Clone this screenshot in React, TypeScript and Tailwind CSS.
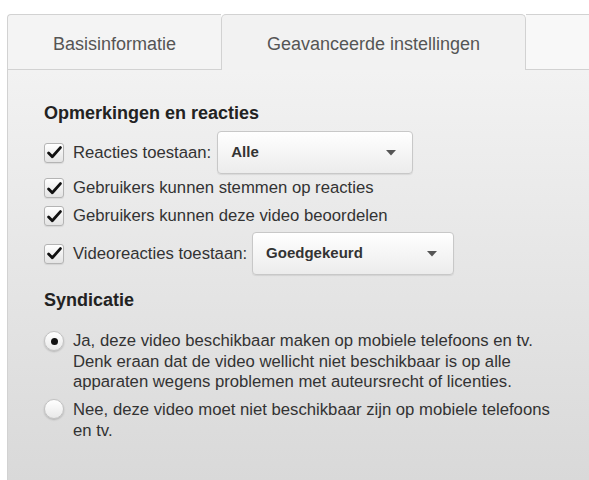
import React, { FC, PropsWithChildren } from "react";

const Checkbox: FC = () => (
  <span className="mr-[9px] flex h-[20px] w-[20px] shrink-0 items-center justify-center rounded-[3px] border border-[#b4b4b4] bg-gradient-to-b from-white to-[#e4e4e4] shadow-[0_1px_1px_rgba(0,0,0,0.08)]">
    <svg width="15" height="13" viewBox="0 0 15 13">
      <path d="M1.6 7 L5.3 10.8 L13.4 1.6" fill="none" stroke="#111" strokeWidth="2.8" strokeLinecap="round" strokeLinejoin="round" />
    </svg>
  </span>
);

const Radio: FC<{ checked?: boolean }> = ({ checked }) => (
  <span className="mr-[9px] flex h-[20px] w-[20px] shrink-0 items-center justify-center rounded-full border border-[#c2c2c2] bg-gradient-to-b from-white to-[#e9e9e9] shadow-[0_1px_2px_rgba(0,0,0,0.2)]">
    {checked && <span className="h-[7px] w-[7px] rounded-full bg-[#111]" />}
  </span>
);

const Select: FC<{ value: string; width: string }> = ({ value, width }) => (
  <div
    className={[
      "flex h-[43px] items-center justify-between rounded-[4px] border border-[#c8c8c8]",
      "bg-gradient-to-b from-white to-[#ececec] pl-[13px] pr-[16px] shadow-[0_1px_1px_rgba(0,0,0,0.08)]",
      width,
    ].join(" ")}
  >
    <span className="text-[15px] font-bold text-[#333]">{value}</span>
    <svg width="10" height="6" viewBox="0 0 10 6">
      <path d="M0 0 H10 L5 5.5 Z" fill="#555" />
    </svg>
  </div>
);

const Row: FC<PropsWithChildren & { classNames?: string }> = ({ classNames, children }) => (
  <div className={`flex items-center ${classNames ?? ""}`}>{children}</div>
);

export default function App() {
  return (
    <div
      className="h-[480px] w-[589px] overflow-hidden bg-white pl-[7px] pt-[14px] text-[#333]"
      style={{ fontFamily: '"Liberation Sans", Arial, sans-serif' }}
    >
      <div className="flex h-full flex-col">
        {/* tabs */}
        <div className="flex h-[56px] shrink-0">
          <div className="flex w-[214px] items-center justify-center rounded-tl-[4px] border-b border-l border-t border-[#d2d2d2] bg-[#f4f4f4] pt-[4px] text-[18px] text-[#555]">
            Basisinformatie
          </div>
          <div className="flex w-[305px] items-center justify-center rounded-t-[5px] border-l border-r border-t border-[#d2d2d2] bg-[#f2f2f2] pt-[4px] text-[18px] text-[#555]">
            Geavanceerde instellingen
          </div>
          <div className="flex-1 border-b border-t border-[#d2d2d2] bg-[#f8f8f8]" />
        </div>

        {/* panel */}
        <div className="flex-1 border-l border-[#d2d2d2] bg-gradient-to-b from-[#f2f2f2] to-[#d9d9d9] pl-[36px] pt-[32px] text-[16.7px]">
          <h3 className="text-[18px] font-bold leading-[22px] text-[#222]">Opmerkingen en reacties</h3>

          <Row classNames="mt-[7px]">
            <Checkbox />
            <span>Reacties toestaan:</span>
            <div className="ml-[6px]">
              <Select value="Alle" width="w-[196px]" />
            </div>
          </Row>
          <Row classNames="mt-[1px] h-[26px]">
            <Checkbox />
            <span>Gebruikers kunnen stemmen op reacties</span>
          </Row>
          <Row classNames="mt-[2px] h-[26px]">
            <Checkbox />
            <span>Gebruikers kunnen deze video beoordelen</span>
          </Row>
          <Row classNames="mt-[3px]">
            <Checkbox />
            <span>Videoreacties toestaan:</span>
            <div className="ml-[5px]">
              <Select value="Goedgekeurd" width="w-[202px]" />
            </div>
          </Row>

          <h3 className="mt-[14px] text-[18px] font-bold leading-[22px] text-[#222]">Syndicatie</h3>

          <div className="mt-[20px] flex items-start leading-[20.5px]">
            <Radio checked />
            <p>
              Ja, deze video beschikbaar maken op mobiele telefoons en tv.
              <br />
              Denk eraan dat de video wellicht niet beschikbaar is op alle
              <br />
              apparaten wegens problemen met auteursrecht of licenties.
            </p>
          </div>
          <div className="mt-[6px] flex items-start leading-[21.5px]">
            <Radio />
            <p>
              Nee, deze video moet niet beschikbaar zijn op mobiele telefoons
              <br />
              en tv.
            </p>
          </div>
        </div>
      </div>
    </div>
  );
}
